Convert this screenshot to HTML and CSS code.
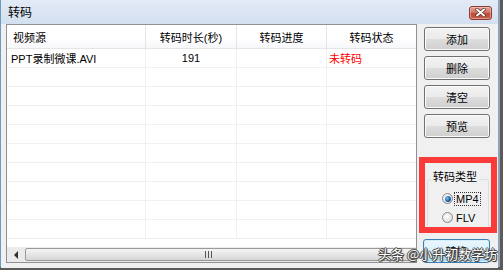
FILE: index.html
```html
<!DOCTYPE html>
<html lang="zh">
<head>
<meta charset="utf-8">
<title>转码</title>
<link rel="stylesheet" href="styles.css">
</head>
<body>
<div class="screen">
  <div class="window">
    <div class="titlebar">
      <span class="title">转码</span>
      <div class="close">
        <svg width="11" height="9" viewBox="0 0 11 9">
          <path d="M2 1.5 L9 7.5 M9 1.5 L2 7.5" stroke="#5a2a22" stroke-width="3.4" stroke-linecap="round"/>
          <path d="M2 1.5 L9 7.5 M9 1.5 L2 7.5" stroke="#ffffff" stroke-width="2" stroke-linecap="round"/>
        </svg>
      </div>
    </div>
    <div class="client">
      <div class="list">
        <div class="grid">
          <div class="row head">
            <div class="c c1">视频源</div>
            <div class="c c2">转码时长(秒)</div>
            <div class="c c3">转码进度</div>
            <div class="c c4">转码状态</div>
          </div>
          <div class="row">
            <div class="c c1 first">PPT录制微课.AVI</div>
            <div class="c c2">191</div>
            <div class="c c3"></div>
            <div class="c c4 status">未转码</div>
          </div>
          <div class="row"><div class="c c1"></div><div class="c c2"></div><div class="c c3"></div><div class="c c4"></div></div>
          <div class="row"><div class="c c1"></div><div class="c c2"></div><div class="c c3"></div><div class="c c4"></div></div>
          <div class="row"><div class="c c1"></div><div class="c c2"></div><div class="c c3"></div><div class="c c4"></div></div>
          <div class="row"><div class="c c1"></div><div class="c c2"></div><div class="c c3"></div><div class="c c4"></div></div>
          <div class="row"><div class="c c1"></div><div class="c c2"></div><div class="c c3"></div><div class="c c4"></div></div>
          <div class="row"><div class="c c1"></div><div class="c c2"></div><div class="c c3"></div><div class="c c4"></div></div>
          <div class="row"><div class="c c1"></div><div class="c c2"></div><div class="c c3"></div><div class="c c4"></div></div>
          <div class="row"><div class="c c1"></div><div class="c c2"></div><div class="c c3"></div><div class="c c4"></div></div>
          <div class="row"><div class="c c1"></div><div class="c c2"></div><div class="c c3"></div><div class="c c4"></div></div>
        </div>
        <div class="hscroll">
          <div class="arrow"><span class="tri"></span></div>
          <div class="thumb"><span class="grip"></span></div>
        </div>
      </div>
      <div class="side">
        <div class="btn">添加</div>
        <div class="btn">删除</div>
        <div class="btn">清空</div>
        <div class="btn">预览</div>
        <div class="group">
          <span class="legend">转码类型</span>
          <div class="opt first-opt"><span class="radio checked"></span><span class="focus">MP4</span></div>
          <div class="opt second-opt"><span class="radio"></span><span class="lbl">FLV</span></div>
          <div class="mark"></div>
        </div>
        <div class="btn default">转换</div>
      </div>
    </div>
  </div>
  <div class="watermark">头条 @小升初数学坊</div>
</div>
</body>
</html>
```

FILE: styles.css
```css
* { box-sizing: border-box; }

body {
  margin: 0;
  background: #5b5b5b;
  font-family: "Liberation Sans", "Noto Sans CJK SC", sans-serif;
  font-size: 11px;
  color: #000;
}

.screen {
  position: relative;
  width: 503px;
  height: 270px;
  overflow: hidden;
  background: #5b5b5b;
}

.window {
  width: 500px;
  height: 267px;
  display: flex;
  flex-direction: column;
  background: #f0f0f0;
  border-left: 1px solid #6a9cc0;
  border-right: 2px solid #8fa3b6;
}

.titlebar {
  height: 24px;
  flex: none;
  display: flex;
  align-items: center;
  justify-content: space-between;
  padding: 0 6px 0 7px;
  background: linear-gradient(#e2ebf6, #d3e0ef);
}

.title {
  font-size: 12px;
  line-height: 14px;
  margin-top: 1px;
}

.close {
  width: 23px;
  height: 14px;
  margin-top: 1px;
  border: 1px solid #8e3a30;
  border-radius: 3px;
  background: linear-gradient(#e8a497, #d47564 45%, #c04a38 55%, #c7604c);
  display: flex;
  align-items: center;
  justify-content: center;
  box-shadow: inset 0 0 0 1px rgba(255, 220, 210, 0.45);
}

.client {
  flex: 1;
  display: flex;
  padding-left: 5px;
  background: #f0f0f0;
}

.list {
  width: 411px;
  height: 239px;
  border: 1px solid #8f9195;
  background: #fff;
  display: flex;
  flex-direction: column;
}

.grid {
  height: 222px;
  overflow: hidden;
}

.row {
  display: flex;
  height: 19px;
  border-bottom: 1px solid #f0f0f0;
}

.row.head {
  height: 24px;
  border-bottom: 1px solid #e5e5e5;
  background: linear-gradient(#ffffff 55%, #f6f7f9);
}

.c {
  height: 100%;
  display: flex;
  align-items: center;
  white-space: nowrap;
  overflow: hidden;
  border-right: 1px solid #f0f0f0;
}

.head .c { border-right-color: #e5e5e5; }

.c1 { width: 139px; padding-left: 6px; }
.c1.first { padding-left: 4px; }
.c2 { width: 91px; justify-content: center; }
.c3 { width: 90px; justify-content: center; }
.c4 { width: 89px; justify-content: center; border-right: none; }
.c4.status { justify-content: flex-start; padding-left: 2px; color: #ff0000; }

.hscroll {
  height: 15px;
  display: flex;
  background: #eaeaea;
}

.arrow {
  width: 17px;
  display: flex;
  align-items: center;
  justify-content: center;
}

.tri {
  width: 0;
  height: 0;
  border-top: 4px solid transparent;
  border-bottom: 4px solid transparent;
  border-right: 4px solid #303030;
}

.thumb {
  flex: 1;
  margin: 1px -1px 1px 1px;
  border: 1px solid #9a9a9a;
  border-radius: 2px;
  background: linear-gradient(#f4f4f4, #e6e6e6 50%, #d6d6d6);
  display: flex;
  align-items: center;
  justify-content: center;
  padding-right: 26px;
}

.grip {
  width: 7px;
  height: 7px;
  background: linear-gradient(90deg, #555 0 1px, transparent 1px 3px, #555 3px 4px, transparent 4px 6px, #555 6px 7px);
}

.side {
  width: 66px;
  margin-left: 7px;
  padding-top: 3px;
  display: flex;
  flex-direction: column;
}

.btn {
  height: 24px;
  margin-bottom: 5px;
  border: 1px solid #707070;
  border-radius: 3px;
  background: linear-gradient(#f2f2f2, #ebebeb 50%, #dddddd 50%, #cfcfcf);
  box-shadow: inset 0 0 0 1px #fbfbfb;
  display: flex;
  align-items: center;
  justify-content: center;
  font-size: 11px;
}

.btn.default {
  margin-top: 9px;
  margin-left: -1px;
  width: 67px;
  border-color: #3c7fb1;
  background: linear-gradient(#eaf6fd, #d9f0fc 50%, #bee6fd 50%, #a7d9f5);
  box-shadow: inset 0 0 0 1px #cfeefe;
}

.group {
  position: relative;
  margin: 36px 0 0 3px;
  width: 62px;
  height: 51px;
  border: 1px solid #d5dfe5;
  border-radius: 3px;
}

.legend {
  display: block;
  width: fit-content;
  margin: -10px 0 0 3px;
  padding: 0 2px;
  line-height: 14px;
  background: #f0f0f0;
  font-size: 11px;
}

.opt {
  display: flex;
  align-items: center;
  height: 13px;
  margin-left: 14px;
}

.first-opt { margin-top: 8px; }
.second-opt { margin-top: 6px; }

.radio {
  width: 11px;
  height: 11px;
  border-radius: 50%;
  border: 1px solid #8a8a8a;
  background: radial-gradient(circle at 40% 40%, #ffffff, #e2e2e2 70%, #cfcfcf);
  margin-right: 2px;
  display: flex;
  align-items: center;
  justify-content: center;
}

.radio.checked::after {
  content: "";
  width: 6px;
  height: 6px;
  border-radius: 50%;
  background: radial-gradient(circle at 35% 35%, #7fc0f0, #1a64a8 55%, #0b3f73);
}

.focus {
  outline: 1px dotted #333;
  outline-offset: 0;
  padding: 0 1px;
  line-height: 12px;
}

.lbl { padding: 0 1px; }

.mark {
  position: absolute;
  left: -9px;
  top: -23px;
  width: 78px;
  height: 76px;
  border: 6px solid #fb3a3a;
}

.watermark {
  position: absolute;
  left: 378px;
  top: 246px;
  font-family: "Noto Sans CJK SC", sans-serif;
  font-size: 13px;
  line-height: 16px;
  color: #ffffff;
  white-space: nowrap;
  text-shadow: 1px 0 0 #444, -1px 0 0 #444, 0 1px 0 #444, 0 -1px 0 #444, 1px 1px 1px #333;
}
```
